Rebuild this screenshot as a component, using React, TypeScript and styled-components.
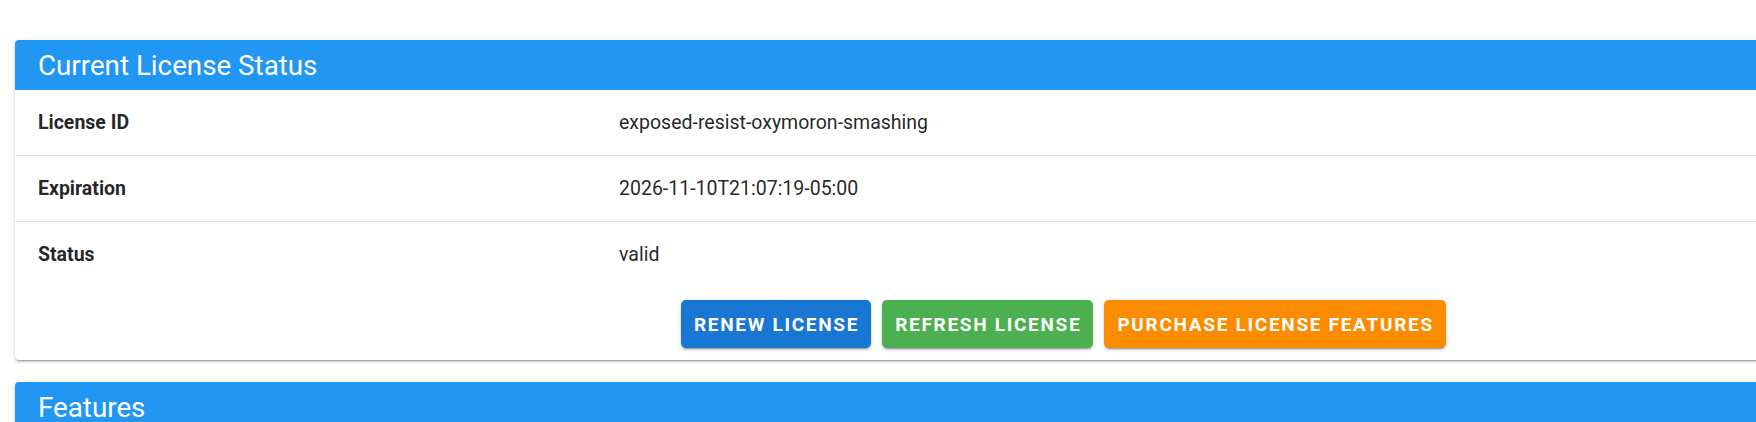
import React from "react";
import styled, { createGlobalStyle } from "styled-components";

const Global = createGlobalStyle`
  html, body {
    margin: 0;
    padding: 0;
    background: #ffffff;
    overflow: hidden;
    font-family: Roboto, "Helvetica Neue", Arial, sans-serif;
  }
`;

const Page = styled.div`
  display: flex;
  flex-direction: column;
  gap: 22px;
  padding: 40px 0 0 15px;
  width: 1800px;
`;

const Card = styled.section`
  background: #ffffff;
  border-radius: 4px;
  box-shadow: 0 3px 1px -2px rgba(0, 0, 0, 0.2), 0 2px 2px 0 rgba(0, 0, 0, 0.14),
    0 1px 5px 0 rgba(0, 0, 0, 0.12);
`;

const CardHeader = styled.header`
  height: 50px;
  display: flex;
  align-items: center;
  padding: 0 23px;
  background: #2196f3;
  border-radius: 4px 4px 0 0;
  color: #ffffff;
  font-size: 27.75px;
  font-weight: 400;
`;

const Row = styled.div<{ $divider?: boolean }>`
  display: grid;
  grid-template-columns: 581px 1fr;
  align-items: center;
  height: 65px;
  border-bottom: ${(p) => (p.$divider ? "1px solid #e0e0e0" : "none")};
  color: rgba(0, 0, 0, 0.87);
  font-size: 19.5px;
`;

const Label = styled.div`
  padding: 0 23px;
  font-weight: 700;
`;

const Value = styled.div`
  padding: 0 23px;
  font-weight: 400;
`;

const Actions = styled.div`
  display: flex;
  gap: 11px;
  padding: 13px 0 12px 666px;
`;

const Button = styled.button<{ $color: string }>`
  height: 48px;
  padding: 0 12px 0 13px;
  border: none;
  border-radius: 5px;
  background: ${(p) => p.$color};
  color: #ffffff;
  font-family: Roboto, Arial, sans-serif;
  font-size: 19px;
  font-weight: 700;
  letter-spacing: 1.7px;
  text-transform: uppercase;
  box-shadow: 0 3px 1px -2px rgba(0, 0, 0, 0.2), 0 2px 2px 0 rgba(0, 0, 0, 0.14),
    0 1px 5px 0 rgba(0, 0, 0, 0.12);
  cursor: pointer;
`;

const rows = [
  { label: "License ID", value: "exposed-resist-oxymoron-smashing" },
  { label: "Expiration", value: "2026-11-10T21:07:19-05:00" },
  { label: "Status", value: "valid" },
];

export default function App() {
  return (
    <>
      <Global />
      <Page>
        <Card>
          <CardHeader>Current License Status</CardHeader>
          {rows.map((r, i) => (
            <Row key={r.label} $divider={i < rows.length - 1}>
              <Label>{r.label}</Label>
              <Value>{r.value}</Value>
            </Row>
          ))}
          <Actions>
            <Button $color="#1976d2">Renew License</Button>
            <Button $color="#4caf50">Refresh License</Button>
            <Button $color="#fb8c00">Purchase License Features</Button>
          </Actions>
        </Card>
        <Card>
          <CardHeader>Features</CardHeader>
          <Row $divider>
            <Label></Label>
          </Row>
        </Card>
      </Page>
    </>
  );
}
